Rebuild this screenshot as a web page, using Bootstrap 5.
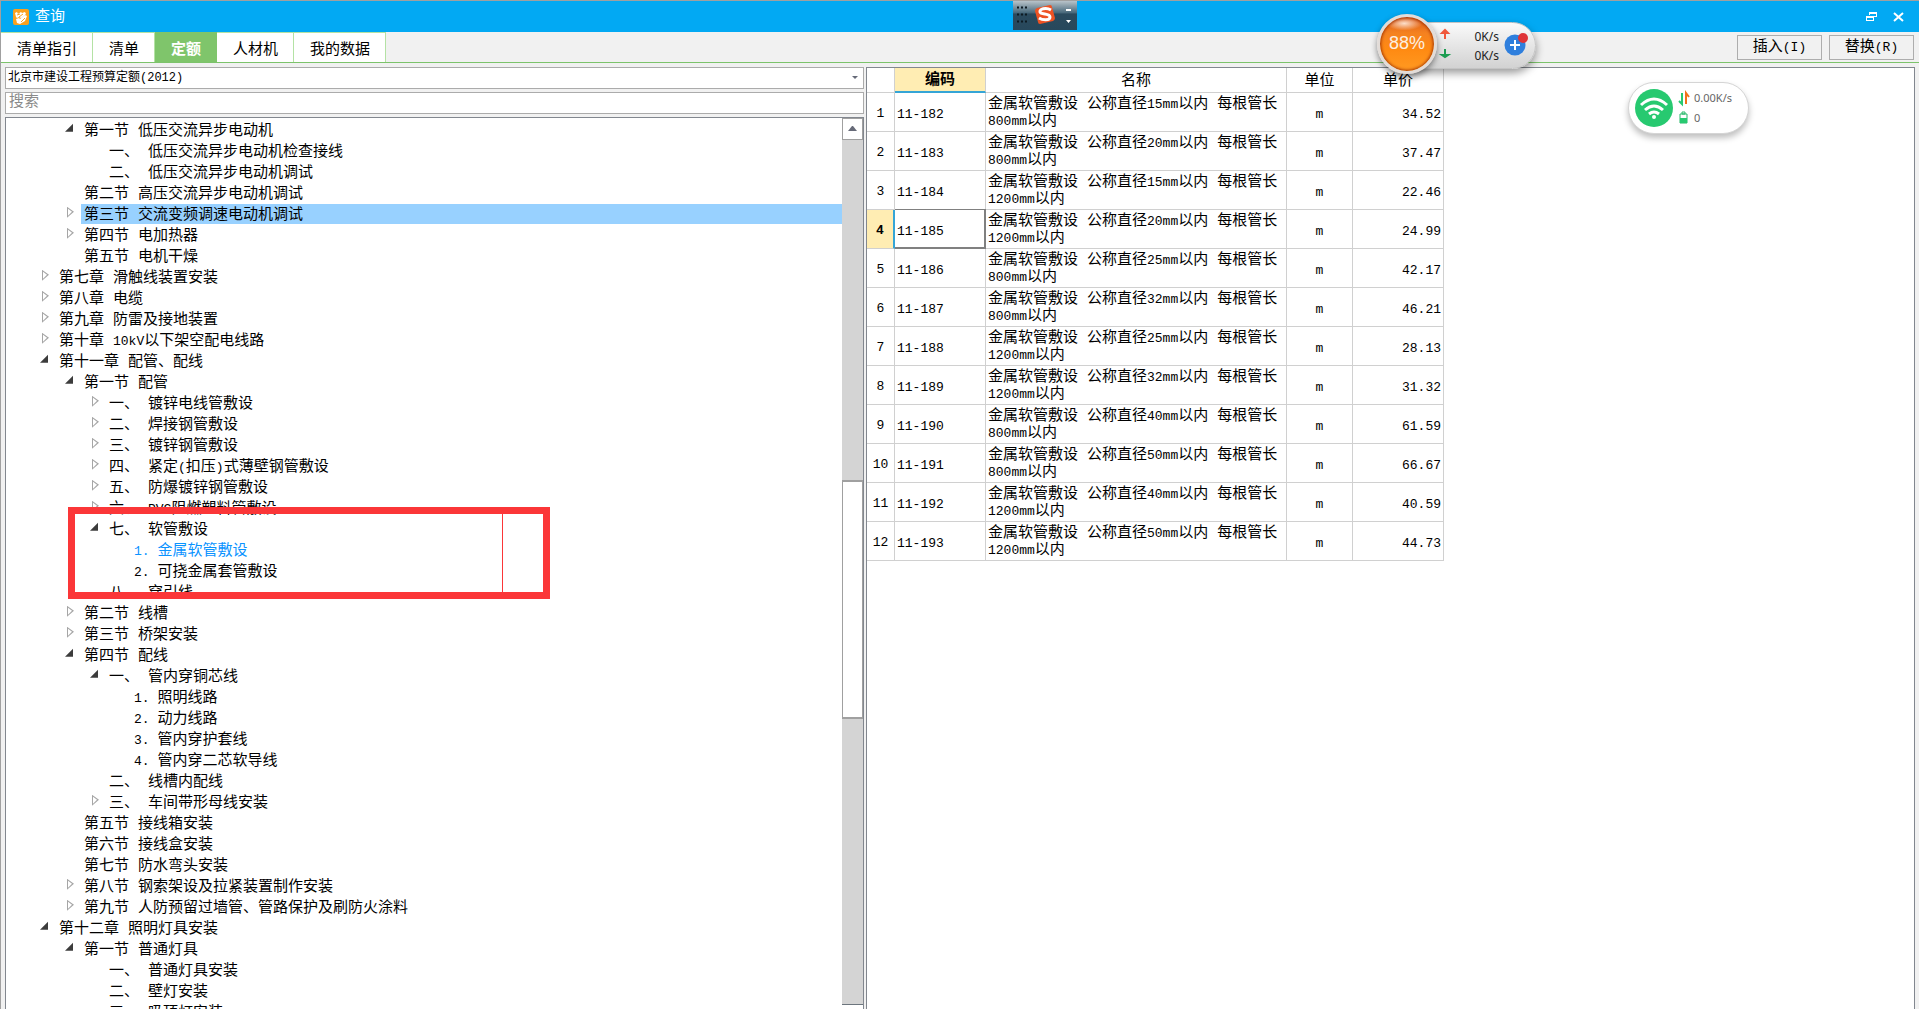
<!DOCTYPE html>
<html lang="zh-CN">
<head>
<meta charset="utf-8">
<meta name="viewport" content="width=device-width, initial-scale=1">
<title>查询</title>
<link href="https://cdn.jsdelivr.net/npm/bootstrap@5.3.0/dist/css/bootstrap.min.css" rel="stylesheet">
<style>
  :root { --cjk: "Liberation Mono", "Noto Sans CJK SC", monospace; }
  body { font: 15px/21px var(--cjk); color: #000; background: #f1f1f1; }
  .window { border-top: 1px solid #a0a0a0; border-left: 1px solid #a0a0a0; }
  .titlebar { height: 31px; background: #02a9f3; color: #fff; padding: 1px 14px 0 12px; gap: 6px; }
  .titlebar button { border: 0; background: none; padding: 0; width: 13px; height: 12px; display: flex; }
  .toolbar-row { height: 31px; border-bottom: 1px solid #7cc36b; padding-right: 5px; }
  .tool-pair { gap: 7px; padding-top: 1px; }
  .tabs .nav-link { color: #000; background: #fff; border: 0; border-top: 1px solid #b4e2a4; border-right: 1px solid #b4e2a4; border-radius: 0; padding: 7px 15px 1px 16px; height: 30px; line-height: 21px; }
  .tabs .nav-link.active { background: #7fc56b; color: #fff; font-weight: 700; border-color: #7fc56b; }
  .tool-btn { width: 85px; height: 25px; border: 1px solid #adadad; background: #f1f1f1; padding: 0; line-height: 21px; color: #000; }
  .half { font-size: 13px; }
  .work { padding: 4px 4px 0 4px; gap: 2px; }
  .side { width: 859px; gap: 3px; }
  .field { height: 22px; border: 1px solid #ababab; border-radius: 0; background: #fff; padding: 0 3px; font: 15px/20px var(--cjk); color: #000; width: 100%; }
  select.field { font-size: 12px; appearance: none; padding: 0 2px; }
  .field::placeholder { color: #8a8a8a; opacity: 1; }
  .picker { display: flex; position: relative; }
  .picker svg { position: absolute; right: 5px; top: 9px; }
  .treebox { border: 1px solid #82878f; border-bottom: 0; background: #fff; }
  .tree { list-style: none; margin: 0; padding: 2px 0 0; overflow: hidden; }
  .tree li { height: 21px; display: flex; white-space: nowrap; }
  .tree li::before { content: ""; width: 11px; height: 11px; margin-top: 3px; margin-right: 5px; flex: none; }
  .tree li.shut::before { background: #a6a6a6; clip-path: polygon(2px 0, 9px 5px, 2px 11px, 2px 0, 3px 2px, 3px 9px, 7px 5px, 3px 2px); }
  .tree li.open::before { background: #3c3c3c; clip-path: polygon(8px 1px, 8px 9px, 0 9px); }
  .tree a { color: #000; text-decoration: none; padding-left: 3px; height: 20px; line-height: 24px; flex: 1; }
  .lv0 { padding-left: 34px; } .lv1 { padding-left: 59px; } .lv2 { padding-left: 84px; } .lv3 { padding-left: 109px; }
  .tree .picked { background: #98d1ff; }
  .tree .current { color: #0a93ff; }
  .scroller { width: 21px; background: #d4d4d4; flex: none; }
  .scroller button { height: 22px; border: 1px solid #a0a0a0; background: #fff; padding: 0; display: flex; align-items: center; justify-content: center; flex: none; }
  .thumb { border: 1px solid #a0a0a0; border-width: 2px 1px; background: #fff; height: 239px; }
  .gap-above { flex: 0 0 340px; }
  .gridbox { border: 1px solid #82878f; background: #fff; flex: 1; border-bottom: 0; }
  .quota { border-collapse: separate; border-spacing: 0; table-layout: fixed; width: 577px; line-height: 17px; }
  .quota th, .quota td { border: 0 solid #d0d0d0; border-width: 0 1px 1px 0; padding: 1px 2px 0; }
  .quota th { text-align: center; font-weight: 400; }
  .quota thead th { height: 25px; padding-top: 2px; }
  .quota tbody tr { height: 39px; }
  .quota tbody th, .quota td.code, .quota td.unit, .quota td.price { font-size: 13px; }
  .quota tbody th { padding: 2px 0 0; }
  .quota td.code, .quota td.unit, .quota td.price { padding-top: 4px; }
  .quota td.unit { text-align: center; } .quota td.price { text-align: right; }
  .quota thead th.on { background: #ffedb3; font-weight: 700; border-bottom: 2px solid #35a5d6; }
  .quota tbody th.on { background: #ffedb3; font-weight: 700; border-right: 2px solid #35a5d6; }
  .quota td.on { box-shadow: inset -1px -1px #808080, 0 -1px #808080; border-color: #808080; }
  .mark-box { position: absolute; left: 68px; top: 507px; width: 482px; height: 92px; border: 7px solid #fb3638; }
  .mark-box::after { content: ""; position: absolute; right: 40px; top: 0; bottom: 0; width: 1px; background: #fb3638; }
  .ime { position: absolute; left: 1013px; top: 1px; width: 64px; height: 29px; }
  .meter { position: absolute; left: 1376px; top: 14px; width: 160px; height: 60px; }
  .meter .pill { position: absolute; left: 20px; right: 0; top: 8px; height: 47px; border-radius: 0 24px 24px 0; border: 1px solid #c4c4c4; background: linear-gradient(#fafafa, #d2d2d2); box-shadow: 0 4px 8px rgba(0,0,0,.4); padding: 4px 36px 0 0; font: 12px/19px "Noto Sans", sans-serif; text-align: right; color: #222; }
  .meter .ball { position: absolute; left: 1px; top: 0; width: 60px; height: 60px; border-radius: 50%; border: 3px solid #e2dcd8; background: radial-gradient(ellipse 18px 7px at 45% 12%, rgba(255,235,220,.9), rgba(255,190,140,0)), linear-gradient(#d9591a, #f58220 30%, #ff8a12 60%, #ff9a22); box-shadow: 0 3px 6px rgba(0,0,0,.45), inset 0 0 3px 1px #a33400; color: #fdf0e2; font: 18px/53px "Liberation Sans", sans-serif; text-align: center; }
  .meter svg { position: absolute; left: 0; top: 0; }
  .wifi { position: absolute; left: 1628px; top: 82px; width: 121px; height: 52px; border-radius: 26px; border: 1px solid #d5d5d5; background: #fff; box-shadow: 0 4px 6px rgba(0,0,0,.25); padding: 5px 0 0 65px; font: 11px/20px "Noto Sans", sans-serif; color: #666; }
  .wifi svg { position: absolute; left: 0; top: 0; }
</style>
<script src="https://cdn.jsdelivr.net/npm/bootstrap@5.3.0/dist/js/bootstrap.bundle.min.js"></script>
</head>
<body>
<div class="window vh-100 d-flex flex-column overflow-hidden">
  <header class="titlebar d-flex align-items-center flex-shrink-0">
    <svg width="16" height="16" viewBox="0 0 16 16"><rect width="16" height="16" rx="2" fill="#f9a11f"/><path d="M2 4l2-1 1 2 3-2 1 1 3-1 1 2-5 4-2-1-2 1-1-1zM3 10l3-1 1 1 5-4 2 1-2 5-5 3-3-1z" fill="#fff"/><path d="M4 6l3-1M6 8l4-3M8 13l4-4" stroke="#f9a11f"/></svg>
    <span class="me-auto">查询</span>
    <button type="button" aria-label="还原" class="me-2"><svg width="13" height="12"><path d="M4 1h8v5H9V5h2V3H5v1H4zM1 5h8v5H1zm1 2v2h6V7z" fill="#fff" fill-rule="evenodd"/></svg></button>
    <button type="button" aria-label="关闭"><svg width="13" height="12"><path d="M2 2l9 8M11 2l-9 8" stroke="#fff" stroke-width="2"/></svg></button>
  </header>
  <div class="toolbar-row d-flex flex-shrink-0">
    <nav class="tabs nav flex-nowrap me-auto">
      <a class="nav-link" href="#">清单指引</a><a class="nav-link" href="#">清单</a><a class="nav-link active" href="#">定额</a><a class="nav-link" href="#">人材机</a><a class="nav-link" href="#">我的数据</a>
    </nav>
    <div class="tool-pair d-flex align-items-center">
      <button type="button" class="tool-btn">插入<span class="half">(I)</span></button>
      <button type="button" class="tool-btn">替换<span class="half">(R)</span></button>
    </div>
  </div>
  <main class="work d-flex flex-grow-1 overflow-hidden">
    <section class="side d-flex flex-column flex-shrink-0">
      <div class="picker">
        <select class="field" aria-label="定额库"><option>北京市建设工程预算定额(2012)</option></select>
        <svg width="7" height="4"><path d="M0 0h6L3 3z" fill="#666a78"/></svg>
      </div>
      <input class="field" type="text" placeholder="搜索" aria-label="搜索">
      <div class="treebox d-flex flex-grow-1 overflow-hidden">
        <ul class="tree flex-grow-1">
          <li class="lv1 open"><a href="#">第一节 低压交流异步电动机</a></li>
          <li class="lv2"><a href="#">一、 低压交流异步电动机检查接线</a></li>
          <li class="lv2"><a href="#">二、 低压交流异步电动机调试</a></li>
          <li class="lv1"><a href="#">第二节 高压交流异步电动机调试</a></li>
          <li class="lv1 shut"><a href="#" class="picked">第三节 交流变频调速电动机调试</a></li>
          <li class="lv1 shut"><a href="#">第四节 电加热器</a></li>
          <li class="lv1"><a href="#">第五节 电机干燥</a></li>
          <li class="lv0 shut"><a href="#">第七章 滑触线装置安装</a></li>
          <li class="lv0 shut"><a href="#">第八章 电缆</a></li>
          <li class="lv0 shut"><a href="#">第九章 防雷及接地装置</a></li>
          <li class="lv0 shut"><a href="#">第十章 <span class="half">10kV</span>以下架空配电线路</a></li>
          <li class="lv0 open"><a href="#">第十一章 配管、配线</a></li>
          <li class="lv1 open"><a href="#">第一节 配管</a></li>
          <li class="lv2 shut"><a href="#">一、 镀锌电线管敷设</a></li>
          <li class="lv2 shut"><a href="#">二、 焊接钢管敷设</a></li>
          <li class="lv2 shut"><a href="#">三、 镀锌钢管敷设</a></li>
          <li class="lv2 shut"><a href="#">四、 紧定<span class="half">(</span>扣压<span class="half">)</span>式薄壁钢管敷设</a></li>
          <li class="lv2 shut"><a href="#">五、 防爆镀锌钢管敷设</a></li>
          <li class="lv2 shut"><a href="#">六、 <span class="half">PVC</span>阻燃塑料管敷设</a></li>
          <li class="lv2 open"><a href="#">七、 软管敷设</a></li>
          <li class="lv3"><a href="#" class="current"><span class="half">1. </span>金属软管敷设</a></li>
          <li class="lv3"><a href="#"><span class="half">2. </span>可挠金属套管敷设</a></li>
          <li class="lv2"><a href="#">八、 穿引线</a></li>
          <li class="lv1 shut"><a href="#">第二节 线槽</a></li>
          <li class="lv1 shut"><a href="#">第三节 桥架安装</a></li>
          <li class="lv1 open"><a href="#">第四节 配线</a></li>
          <li class="lv2 open"><a href="#">一、 管内穿铜芯线</a></li>
          <li class="lv3"><a href="#"><span class="half">1. </span>照明线路</a></li>
          <li class="lv3"><a href="#"><span class="half">2. </span>动力线路</a></li>
          <li class="lv3"><a href="#"><span class="half">3. </span>管内穿护套线</a></li>
          <li class="lv3"><a href="#"><span class="half">4. </span>管内穿二芯软导线</a></li>
          <li class="lv2"><a href="#">二、 线槽内配线</a></li>
          <li class="lv2 shut"><a href="#">三、 车间带形母线安装</a></li>
          <li class="lv1"><a href="#">第五节 接线箱安装</a></li>
          <li class="lv1"><a href="#">第六节 接线盒安装</a></li>
          <li class="lv1"><a href="#">第七节 防水弯头安装</a></li>
          <li class="lv1 shut"><a href="#">第八节 钢索架设及拉紧装置制作安装</a></li>
          <li class="lv1 shut"><a href="#">第九节 人防预留过墙管、管路保护及刷防火涂料</a></li>
          <li class="lv0 open"><a href="#">第十二章 照明灯具安装</a></li>
          <li class="lv1 open"><a href="#">第一节 普通灯具</a></li>
          <li class="lv2"><a href="#">一、 普通灯具安装</a></li>
          <li class="lv2"><a href="#">二、 壁灯安装</a></li>
          <li class="lv2"><a href="#">三、 吸顶灯安装</a></li>
        </ul>
        <div class="scroller d-flex flex-column">
          <button type="button" aria-label="向上"><svg width="9" height="5"><path d="M4 0h1l4 5H0z" fill="#666a78"/></svg></button>
          <div class="gap-above"></div>
          <div class="thumb flex-shrink-0"></div>
          <div class="flex-grow-1"></div>
          <div class="border-top border-secondary bg-white pt-1"></div>
        </div>
      </div>
    </section>
    <section class="gridbox">
      <table class="quota">
        <colgroup><col style="width:28px"><col style="width:91px"><col style="width:301px"><col style="width:66px"><col style="width:91px"></colgroup>
        <thead><tr><th></th><th class="on">编码</th><th>名称</th><th>单位</th><th>单价</th></tr></thead>
        <tbody>
          <tr><th>1</th><td class="code">11-182</td><td>金属软管敷设 公称直径<span class="half">15mm</span>以内 每根管长<br><span class="half">800mm</span>以内</td><td class="unit">m</td><td class="price">34.52</td></tr>
          <tr><th>2</th><td class="code">11-183</td><td>金属软管敷设 公称直径<span class="half">20mm</span>以内 每根管长<br><span class="half">800mm</span>以内</td><td class="unit">m</td><td class="price">37.47</td></tr>
          <tr><th>3</th><td class="code">11-184</td><td>金属软管敷设 公称直径<span class="half">15mm</span>以内 每根管长<br><span class="half">1200mm</span>以内</td><td class="unit">m</td><td class="price">22.46</td></tr>
          <tr><th class="on">4</th><td class="code on">11-185</td><td>金属软管敷设 公称直径<span class="half">20mm</span>以内 每根管长<br><span class="half">1200mm</span>以内</td><td class="unit">m</td><td class="price">24.99</td></tr>
          <tr><th>5</th><td class="code">11-186</td><td>金属软管敷设 公称直径<span class="half">25mm</span>以内 每根管长<br><span class="half">800mm</span>以内</td><td class="unit">m</td><td class="price">42.17</td></tr>
          <tr><th>6</th><td class="code">11-187</td><td>金属软管敷设 公称直径<span class="half">32mm</span>以内 每根管长<br><span class="half">800mm</span>以内</td><td class="unit">m</td><td class="price">46.21</td></tr>
          <tr><th>7</th><td class="code">11-188</td><td>金属软管敷设 公称直径<span class="half">25mm</span>以内 每根管长<br><span class="half">1200mm</span>以内</td><td class="unit">m</td><td class="price">28.13</td></tr>
          <tr><th>8</th><td class="code">11-189</td><td>金属软管敷设 公称直径<span class="half">32mm</span>以内 每根管长<br><span class="half">1200mm</span>以内</td><td class="unit">m</td><td class="price">31.32</td></tr>
          <tr><th>9</th><td class="code">11-190</td><td>金属软管敷设 公称直径<span class="half">40mm</span>以内 每根管长<br><span class="half">800mm</span>以内</td><td class="unit">m</td><td class="price">61.59</td></tr>
          <tr><th>10</th><td class="code">11-191</td><td>金属软管敷设 公称直径<span class="half">50mm</span>以内 每根管长<br><span class="half">800mm</span>以内</td><td class="unit">m</td><td class="price">66.67</td></tr>
          <tr><th>11</th><td class="code">11-192</td><td>金属软管敷设 公称直径<span class="half">40mm</span>以内 每根管长<br><span class="half">1200mm</span>以内</td><td class="unit">m</td><td class="price">40.59</td></tr>
          <tr><th>12</th><td class="code">11-193</td><td>金属软管敷设 公称直径<span class="half">50mm</span>以内 每根管长<br><span class="half">1200mm</span>以内</td><td class="unit">m</td><td class="price">44.73</td></tr>
        </tbody>
      </table>
    </section>
  </main>
</div>
<div class="mark-box"></div>
<svg class="ime" viewBox="0 0 64 29"><defs><linearGradient id="g" x2="0" y2="1"><stop offset="0" stop-color="#b9c3c9"/><stop offset=".4" stop-color="#4a6a7c"/><stop offset=".45" stop-color="#2b4a5d"/><stop offset="1" stop-color="#27485c"/></linearGradient></defs><rect width="64" height="29" fill="url(#g)"/><path d="M4 6.500h12M4 13.500h12M4 20.500h12" stroke="#0d1a22" stroke-width="2" stroke-dasharray="2 2"/><path d="M24 7l13-3q2 0 2 2l3 11q0 2-2 3l-13 3q-2 0-2-2l-3-11q0-2 2-3z" fill="#ee5223"/><path d="M38 9c-5-3-12-1-11 2s10 1 10 5-8 3-11 1" fill="none" stroke="#fff" stroke-width="3"/><path d="M53 8h5v2h-5zM53 19h5l-2.500 3z" fill="#fff"/></svg>
<div class="meter">
  <div class="pill">0K/s<br>0K/s</div>
  <svg width="160" height="60"><path d="M69 25v-6h-3l3-3 3 3h-3" fill="#f0583c" stroke="#f0583c" stroke-width="2"/><path d="M69 35v6h-3l3 2 3-2h-3" fill="#1d9d52" stroke="#1d9d52" stroke-width="2"/><circle cx="139" cy="31" r="10.500" fill="#2f7fdd"/><path d="M134 31h10M139 26v10" stroke="#fff" stroke-width="2"/><circle cx="147" cy="24" r="5" fill="#df3438"/></svg>
  <div class="ball">88%</div>
</div>
<div class="wifi">0.00K/s<br>0
  <svg width="118" height="49"><circle cx="25" cy="25" r="19" fill="#27c970"/><g fill="none" stroke="#fff" stroke-width="3"><path d="M12 22q13-12 26 0M16 27q9-8 18 0M20 31q5-4 10 0"/></g><circle cx="25" cy="34" r="2" fill="#fff"/><path d="M53 10v11l-3-3" fill="none" stroke="#27c970" stroke-width="2"/><path d="M57 21V10l3 4" fill="none" stroke="#f27318" stroke-width="2"/><path d="M51 31h7v9h-7zM53 29h3v2h-3z" fill="#fff" stroke="#27b868"/><path d="M51 35h7v5h-7z" fill="#27c970"/></svg>
</div>
</body>
</html>
